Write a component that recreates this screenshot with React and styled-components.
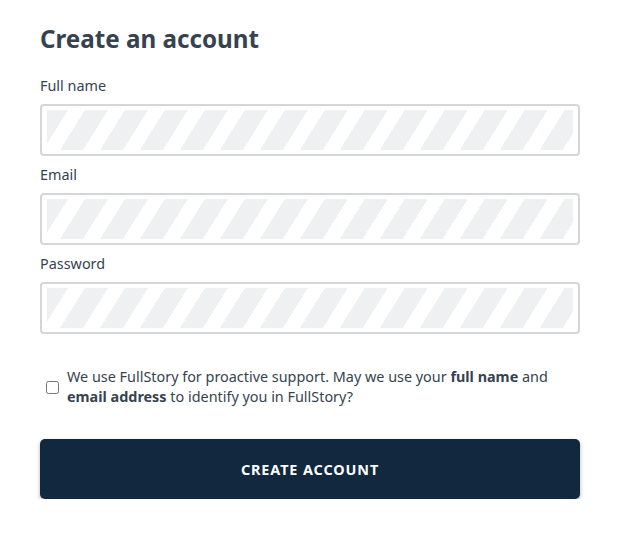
import React from "react";
import styled, { createGlobalStyle } from "styled-components";

const Global = createGlobalStyle`
  html, body { margin: 0; padding: 0; background: #fff; }
  body { font-family: "Noto Sans", "Open Sans", sans-serif; color: #36434f; }
`;

const Page = styled.form`
  width: 540px;
  padding: 22px 40px 0;
  display: flex;
  flex-direction: column;
`;

const Title = styled.h1`
  margin: 0 0 20px;
  font-size: 24.2px;
  line-height: 34px;
  font-weight: 700;
  color: #36434f;
`;

const Field = styled.div`
  display: flex;
  flex-direction: column;
  gap: 9px;
  margin-bottom: 9px;
`;

const Label = styled.label`
  font-size: 14.4px;
  line-height: 19px;
  color: #36434f;
`;

const InputBox = styled.div`
  height: 52px;
  box-sizing: border-box;
  border: 2px solid #d6d6d6;
  border-radius: 4px;
  padding: 4px 5px;
  display: flex;
`;

const Skeleton = styled.div`
  flex: 1;
  background: repeating-linear-gradient(
    122deg,
    #eff0f2 0 17.8px,
    #ffffff 17.8px 32.2px,
    #eff0f2 32.2px 33.9px
  );
`;

const Consent = styled.label`
  display: flex;
  align-items: center;
  gap: 8px;
  margin: 24px 0 0 6px;
  font-size: 14.4px;
  line-height: 20px;
  color: #36434f;
`;

const Check = styled.input`
  width: 13px;
  height: 13px;
  margin: 0;
  flex: none;
`;

const Button = styled.button`
  margin-top: 32px;
  height: 60px;
  border: none;
  border-radius: 5px;
  background: #11283f;
  color: #fff;
  font-family: inherit;
  font-size: 14.4px;
  font-weight: 700;
  letter-spacing: 0.9px;
  box-shadow: 0 2px 4px rgba(0, 0, 0, 0.3);
  cursor: pointer;
`;

const fields = ["Full name", "Email", "Password"];

export default function App() {
  return (
    <>
      <Global />
      <Page onSubmit={(e) => e.preventDefault()}>
        <Title>Create an account</Title>
        {fields.map((f) => (
          <Field key={f}>
            <Label>{f}</Label>
            <InputBox>
              <Skeleton />
            </InputBox>
          </Field>
        ))}
        <Consent>
          <Check type="checkbox" />
          <span>
            We use FullStory for proactive support. May we use your <b>full name</b> and{" "}
            <b>email address</b> to identify you in FullStory?
          </span>
        </Consent>
        <Button type="submit">CREATE ACCOUNT</Button>
      </Page>
    </>
  );
}
